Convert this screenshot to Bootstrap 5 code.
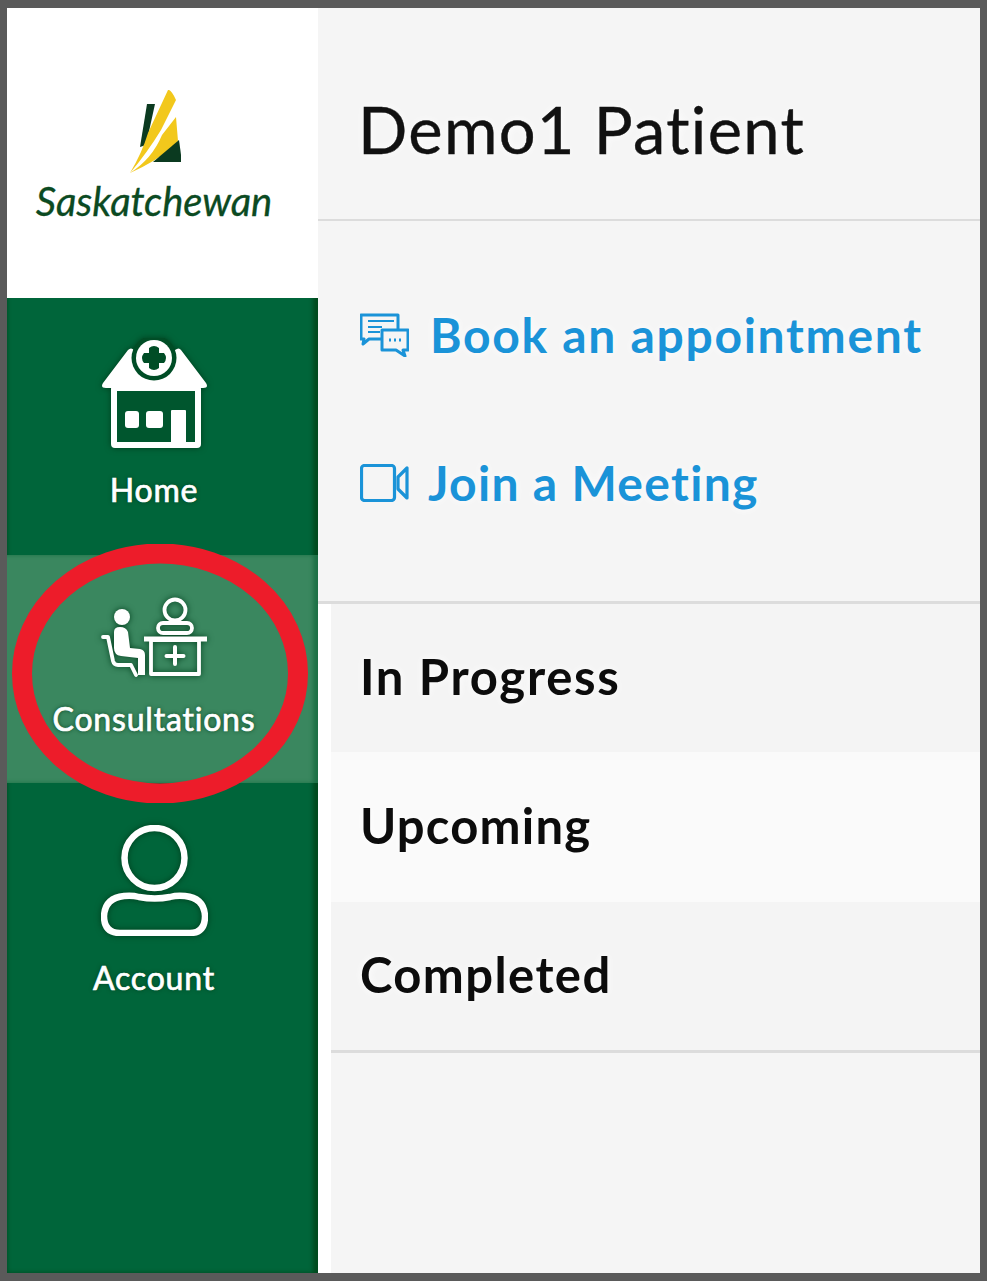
<!DOCTYPE html>
<html lang="en">
<head>
<meta charset="utf-8">
<title>Consultations</title>
<link href="https://cdn.jsdelivr.net/npm/bootstrap@5.3.0/dist/css/bootstrap.min.css" rel="stylesheet">
<style>
html,body{height:100%;margin:0}
body{background:#5a5a5a;font-family:"Lato","Noto Sans",sans-serif;overflow:hidden;font-variant-ligatures:none}
.frame-box{height:1281px;padding:8px 7px;position:relative}
.app-shell{height:100%;background:#f5f5f5;overflow:hidden}
.side-rail{width:311px;flex:none;background:#00653a;box-shadow:inset -5px 0 4px #004a1e,inset 0 4px 4px #004a1e}
.logo-area{height:290px;background:#fff;padding:82px 17px 0 0;flex:none}
.logo-mark{width:56px;height:86px;display:block;margin-left:-3px}
.logo-word{font-size:40px;font-style:italic;color:#0b4a22;line-height:44px;margin-top:3px;letter-spacing:-.1px;white-space:nowrap;-webkit-text-stroke:.3px #0b4a22}
.rail-item{color:#fff;text-decoration:none;text-align:center;display:flex;flex-direction:column;align-items:center;text-shadow:0 0 4px #003d1c;padding-right:17px}
.rail-item svg{display:block;filter:drop-shadow(0 0 3px #003d1c)}
.rail-label{font-size:32px;line-height:40px;letter-spacing:.8px;-webkit-text-stroke:.7px #fff}
.item-home{height:257px;padding-top:40px}
.item-home .rail-label{margin-top:22px}
.item-consult{height:228px;padding-top:41px;background:#3a875f;box-shadow:inset -5px 0 4px #1d7045}
.item-consult .rail-label{margin-top:22px}
.item-account{padding-top:42px}
.item-account .rail-label{margin-top:22px}
.main-pane{min-width:0;text-shadow:0 0 8px #fff}
.pane-title{height:213px;border-bottom:2px solid #dcdcdc;padding:77px 0 0 40px;font-size:65px;line-height:88px;color:#111;background:#f5f5f5;letter-spacing:1.300px;-webkit-text-stroke:.4px #111}
.pane-body{padding-left:13px;background:#fff}
.links-block{margin-left:-13px;padding:85px 0 0 42px;height:383px;background:#f5f5f5;border-bottom:3px solid #dcdcdc}
.action-link{display:flex;align-items:center;color:#1a93d8;text-decoration:none;font-size:48px;font-weight:700;height:58px;letter-spacing:1.700px}
.action-link svg{flex:none}
.link-book svg{margin-right:21px}
.link-join{margin-top:90px;letter-spacing:1.300px}
.link-join svg{margin-right:19px}
.sect-row{height:150px;display:flex;align-items:center;padding:0 0 3px 29px;font-size:49px;font-weight:700;color:#0c0c0c;letter-spacing:1.400px}
.row-first{height:148px;letter-spacing:1.700px}
.row-plain{background:#f4f4f4}
.row-white{background:#fafafa;letter-spacing:1.200px}
.row-end{border-bottom:3px solid #dcdcdc;height:151px}
.fill-rest{height:230px;background:#f5f5f5}
.red-ring{position:absolute;left:12px;top:544px;width:296px;height:259px;pointer-events:none}
</style>
</head>
<body>
<div class="frame-box">
  <div class="app-shell d-flex">
    <nav class="side-rail d-flex flex-column">
      <div class="logo-area d-flex flex-column align-items-center">
        <svg class="logo-mark" viewBox="0 0 56 86" aria-hidden="true">
          <path d="M22 14h8L21 55l-6 2z" fill="#0b3a20"/>
          <path d="M43 0q3-1 8 10L36 40Q22 63 5 83q12-20 18-40z" fill="#f2c81c"/>
          <path d="M51 27l2 24-4 5Q30 72 5 83q22-14 32-38z" fill="#f2c81c"/>
          <path d="M54 50l3 22H28z" fill="#0b3a20"/>
        </svg>
        <div class="logo-word">Saskatchewan</div>
      </div>
      <a class="rail-item item-home" href="#">
        <svg width="107" height="110" viewBox="0 0 107 110" aria-hidden="true">
          <path d="M27 12 2 45q-3 5 3 5h97q6 0 3-5L80 12q-2-3-6 0L55 22H40L33 12q-3-3-6 0z" fill="#fff"/>
          <circle cx="53" cy="20" r="22.500" fill="#004d26"/>
          <circle cx="53" cy="20" r="18" fill="#fff"/>
          <path d="M48 10q5-4 10 0v5h5q4 5 0 10h-5v5q-5 4-10 0v-5h-5q-4-5 0-10h5z" fill="#004d26"/>
          <rect x="13" y="50" width="84" height="57" rx="1" fill="#00562e" stroke="#fff" stroke-width="6" stroke-linejoin="round"/>
          <rect x="24" y="73" width="14" height="17" rx="3" fill="#fff"/>
          <rect x="45" y="73" width="17" height="17" rx="3" fill="#fff"/>
          <rect x="70" y="72" width="15" height="36" rx="1" fill="#fff"/>
        </svg>
        <span class="rail-label">Home</span>
      </a>
      <a class="rail-item item-consult" href="#">
        <svg width="107" height="81" viewBox="0 0 107 81" aria-hidden="true">
          <g fill="none" stroke="#fff" stroke-width="3.800" stroke-linejoin="round" stroke-linecap="round">
            <circle cx="74" cy="14" r="10.500"/>
            <rect x="57" y="27" width="34" height="10" rx="5"/>
            <rect x="50" y="44" width="48" height="34"/>
            <path d="M74 51v17M65.500 60h17" stroke-width="4"/>
            <path d="M2 41h5l5 24q1 4 5 4h13l5 10"/>
          </g>
          <path d="M43 43h63" stroke="#fff" stroke-width="5"/>
          <circle cx="21" cy="21" r="8" fill="#fff"/>
          <path d="M13 36q0-5 6-5 6 0 8 5l2 16 10 1q5 1 5 6v20h-7V62l-17-2q-7-1-7-8z" fill="#fff"/>
        </svg>
        <span class="rail-label">Consultations</span>
      </a>
      <a class="rail-item item-account" href="#">
        <svg width="107" height="111" viewBox="0 0 107 111" aria-hidden="true">
          <g fill="none" stroke="#fff" stroke-width="6.500">
            <circle cx="53.500" cy="33" r="30"/>
            <path d="M23 71q8-1 15 1 16 3 31 0 7-2 15 -1 19 2 20 20 0 17-15 17H19Q3 108 3 91q1-18 20-20z"/>
          </g>
        </svg>
        <span class="rail-label">Account</span>
      </a>
    </nav>
    <main class="main-pane flex-grow-1">
      <div class="pane-title">Demo1 Patient</div>
      <div class="pane-body">
        <div class="links-block">
          <a class="action-link link-book" href="#">
            <svg width="49" height="44" viewBox="0 0 49 44" fill="none" stroke="#1a93d8" stroke-width="3" stroke-linejoin="round" aria-hidden="true">
              <path d="M22 26H9l-6 5 1-5H1V2h37v14"/>
              <path d="M8 8h26M8 14h14M8 19h12" stroke-width="2.200"/>
              <path d="M22 17h26v20h-5l2 6-9-6H22z"/>
              <path d="M29 27h2M34 27h2M39 27h2" stroke-width="3"/>
            </svg>
            <span>Book an appointment</span>
          </a>
          <a class="action-link link-join" href="#">
            <svg width="49" height="38" viewBox="0 0 49 38" fill="none" stroke="#1a93d8" stroke-width="3.200" stroke-linejoin="round" aria-hidden="true">
              <rect x="1.500" y="1.500" width="33" height="35" rx="3"/>
              <path d="M38 13 47 4v30l-9-9z"/>
            </svg>
            <span>Join a Meeting</span>
          </a>
        </div>
        <div class="sect-row row-plain row-first">In Progress</div>
        <div class="sect-row row-white">Upcoming</div>
        <div class="sect-row row-plain row-end">Completed</div>
        <div class="fill-rest"></div>
      </div>
    </main>
  </div>
  <svg class="red-ring" viewBox="0 0 296 259" aria-hidden="true">
    <ellipse cx="148" cy="129.500" rx="138" ry="120" fill="none" stroke="#ed1c2a" stroke-width="20"/>
  </svg>
</div>
<script src="https://cdn.jsdelivr.net/npm/bootstrap@5.3.0/dist/js/bootstrap.bundle.min.js"></script>
</body>
</html>
